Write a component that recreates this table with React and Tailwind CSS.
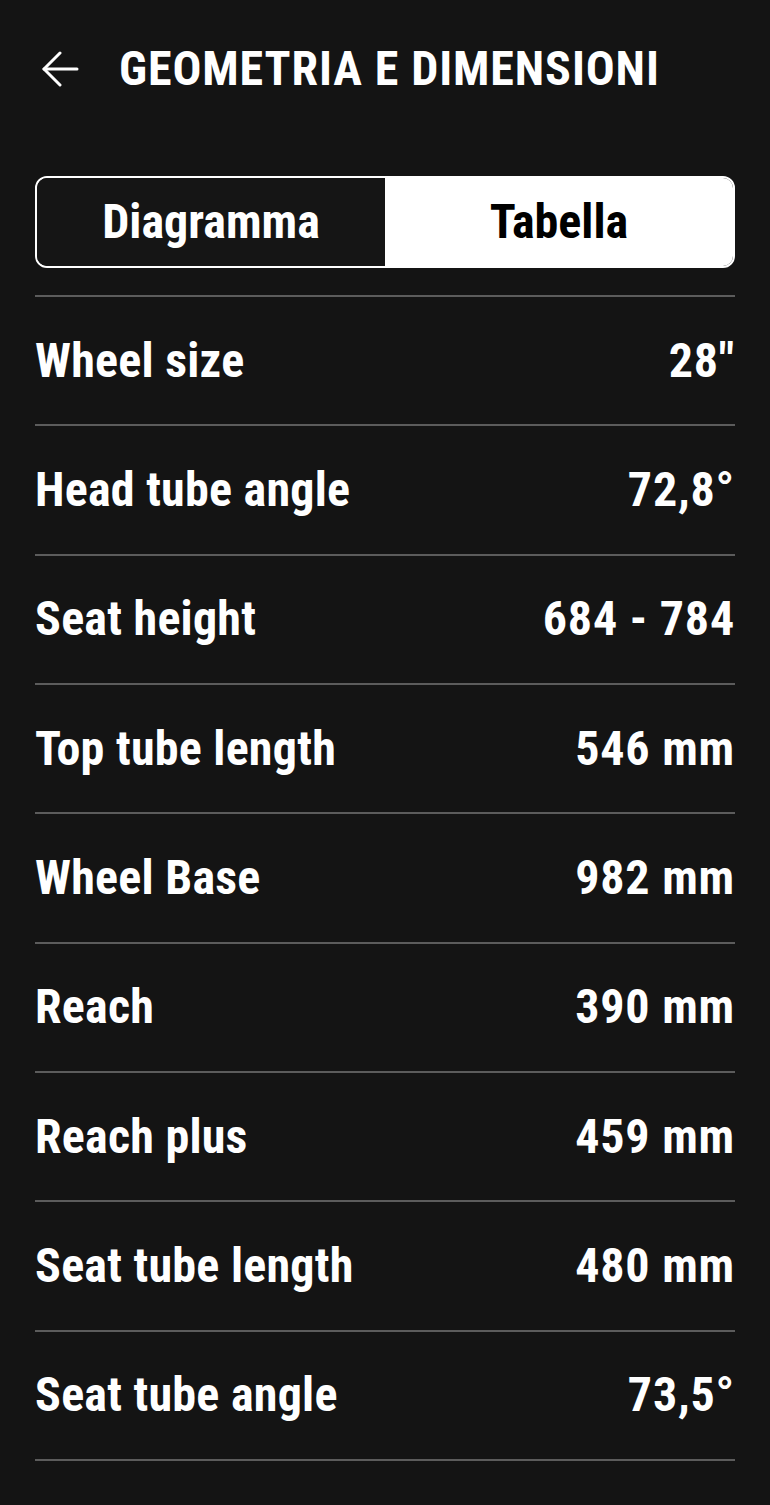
import { useState } from 'react';

const rows = [
  { label: 'Wheel size', value: '28"' },
  { label: 'Head tube angle', value: '72,8°' },
  { label: 'Seat height', value: '684 - 784' },
  { label: 'Top tube length', value: '546 mm' },
  { label: 'Wheel Base', value: '982 mm' },
  { label: 'Reach', value: '390 mm' },
  { label: 'Reach plus', value: '459 mm' },
  { label: 'Seat tube length', value: '480 mm' },
  { label: 'Seat tube angle', value: '73,5°' },
];

function BackArrow() {
  return (
    <svg width="38" height="36" viewBox="0 0 38 36" fill="none" stroke="white" strokeWidth="3" strokeLinecap="round" strokeLinejoin="round">
      <path d="M19 2 L3 18 L19 34" />
      <path d="M3 18 H36" />
    </svg>
  );
}

export default function App() {
  const [tab, setTab] = useState('table');

  return (
    <div className="min-h-[1505px] bg-[#141414] text-white font-['Roboto',sans-serif] font-stretch-condensed">
      <div className="h-[138px] flex items-center px-[41px]">
        <button className="mr-[40px]">
          <BackArrow />
        </button>
        <h1 className="text-[48px] font-bold leading-none tracking-[0.9px]">GEOMETRIA E DIMENSIONI</h1>
      </div>

      <div className="px-[35px]">
        <div className="mt-[38px] h-[92px] flex rounded-[12px] border-2 border-white overflow-hidden">
          <button
            className={`flex-1 text-[48px] font-bold ${tab === 'diagram' ? 'bg-white text-black' : 'bg-[#151515] text-white'}`}
            onClick={() => setTab('diagram')}
          >
            Diagramma
          </button>
          <button
            className={`flex-1 text-[48px] font-bold ${tab === 'table' ? 'bg-white text-black' : 'bg-[#151515] text-white'}`}
            onClick={() => setTab('table')}
          >
            Tabella
          </button>
        </div>

        <div className="mt-[27px] border-t-2 border-[#5c5c5c]">
          {rows.map(row => (
            <div key={row.label} className="h-[129.33px] flex items-center justify-between border-b-2 border-[#5c5c5c]">
              <span className="text-[48px] font-bold tracking-[0.25px]">{row.label}</span>
              <span className="text-[48px] font-bold tracking-[0.8px]">{row.value}</span>
            </div>
          ))}
        </div>
      </div>
    </div>
  );
}
